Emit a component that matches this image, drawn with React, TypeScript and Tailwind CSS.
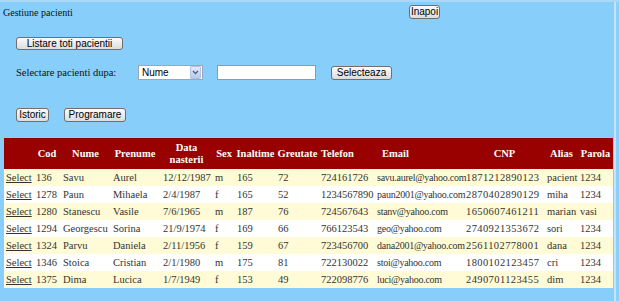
import React from 'react';

interface Pacient {
    cod: string;
    nume: string;
    prenume: string;
    data: string;
    sex: string;
    inaltime: string;
    greutate: string;
    telefon: string;
    email: string;
    cnp: string;
    alias: string;
    parola: string;
}

const pacienti: Pacient[] = [
    { cod: '136', nume: 'Savu', prenume: 'Aurel', data: '12/12/1987', sex: 'm', inaltime: '165', greutate: '72', telefon: '724161726', email: 'savu.aurel@yahoo.com', cnp: '1871212890123', alias: 'pacient', parola: '1234' },
    { cod: '1278', nume: 'Paun', prenume: 'Mihaela', data: '2/4/1987', sex: 'f', inaltime: '165', greutate: '52', telefon: '1234567890', email: 'paun2001@yahoo.com', cnp: '2870402890129', alias: 'miha', parola: '1234' },
    { cod: '1280', nume: 'Stanescu', prenume: 'Vasile', data: '7/6/1965', sex: 'm', inaltime: '187', greutate: '76', telefon: '724567643', email: 'stanv@yahoo.com', cnp: '1650607461211', alias: 'marian', parola: 'vasi' },
    { cod: '1294', nume: 'Georgescu', prenume: 'Sorina', data: '21/9/1974', sex: 'f', inaltime: '169', greutate: '66', telefon: '766123543', email: 'geo@yahoo.com', cnp: '2740921353672', alias: 'sori', parola: '1234' },
    { cod: '1324', nume: 'Parvu', prenume: 'Daniela', data: '2/11/1956', sex: 'f', inaltime: '159', greutate: '67', telefon: '723456700', email: 'dana2001@yahoo.com', cnp: '2561102778001', alias: 'dana', parola: '1234' },
    { cod: '1346', nume: 'Stoica', prenume: 'Cristian', data: '2/1/1980', sex: 'm', inaltime: '175', greutate: '81', telefon: '722130022', email: 'stoi@yahoo.com', cnp: '1800102123457', alias: 'cri', parola: '1234' },
    { cod: '1375', nume: 'Dima', prenume: 'Lucica', data: '1/7/1949', sex: 'f', inaltime: '153', greutate: '49', telefon: '722098776', email: 'luci@yahoo.com', cnp: '2490701123455', alias: 'dim', parola: '1234' },
];

const Btn: React.FC<{ label: string; className: string }> = ({ label, className }) => (
    <button
        type="button"
        className={`flex items-center justify-center border border-[#6f6f6f] rounded-[3px] bg-gradient-to-b from-[#fbfbfb] to-[#dcdcdc] text-[10px] leading-none text-black font-['Liberation_Sans',Arial,sans-serif] ${className}`}
    >
        {label}
    </button>
);

const App: React.FC = () => {
    return (
        <div className="flex w-[619px] h-[301px] bg-[#87cefa] border-t-2 border-t-[#a9d9f7] overflow-hidden font-['Liberation_Serif','Times_New_Roman',serif]">
            <div className="w-[614px] flex flex-col">
                <div className="flex items-center h-[14px] mt-[3px] pl-[3px]">
                    <span className="w-[406px] text-[10px] text-[#111]">Gestiune pacienti</span>
                    <Btn label="Inapoi" className="w-[31px] h-[14px]" />
                </div>

                <div className="pl-[16px] mt-[18px]">
                    <Btn label="Listare toti pacientii" className="w-[107px] h-[13px]" />
                </div>

                <div className="flex items-center pl-[16px] mt-[15px] h-[15px]">
                    <span className="w-[122px] text-[10.5px] text-[#111]">Selectare pacienti dupa:</span>
                    <div className="flex items-center w-[65px] h-[15px] bg-white border border-[#9aa7b5]">
                        <span className="flex-1 pl-[3px] text-[10px] font-['Liberation_Sans',Arial,sans-serif] text-black">Nume</span>
                        <span className="flex items-center justify-center w-[11px] h-[13px] mr-[1px] bg-gradient-to-b from-[#e3ebfb] to-[#b8c9ef] border border-[#b3c3e6] rounded-[1px]">
                            <svg width="7" height="5" viewBox="0 0 7 5">
                                <path d="M1 1 L3.5 3.5 L6 1" fill="none" stroke="#4d6185" strokeWidth="1.4" />
                            </svg>
                        </span>
                    </div>
                    <div className="w-[99px] h-[15px] ml-[14px] bg-white border border-[#8f9aa6]" />
                    <Btn label="Selecteaza" className="w-[61px] h-[14px] ml-[15px]" />
                </div>

                <div className="flex items-center gap-[15px] pl-[16px] mt-[28px]">
                    <Btn label="Istoric" className="w-[33px] h-[14px]" />
                    <Btn label="Programare" className="w-[62px] h-[14px]" />
                </div>

                <table className="ml-[4px] mt-[16px] w-[609px] table-fixed border-collapse text-[10.5px] text-[#333333]">
                    <colgroup>
                        <col className="w-[29px]" />
                        <col className="w-[28px]" />
                        <col className="w-[49px]" />
                        <col className="w-[50px]" />
                        <col className="w-[53px]" />
                        <col className="w-[22px]" />
                        <col className="w-[41px]" />
                        <col className="w-[43px]" />
                        <col className="w-[56px]" />
                        <col className="w-[89px]" />
                        <col className="w-[81px]" />
                        <col className="w-[33px]" />
                        <col className="w-[35px]" />
                    </colgroup>
                    <thead>
                        <tr className="h-[31px] bg-[#990000] text-white font-bold leading-[12px]">
                            <th className="p-0"></th>
                            <th className="p-0 text-center">Cod</th>
                            <th className="p-0 text-center">Nume</th>
                            <th className="p-0 text-center">Prenume</th>
                            <th className="p-0 text-center">Data nasterii</th>
                            <th className="p-0 text-center">Sex</th>
                            <th className="p-0 text-center">Inaltime</th>
                            <th className="p-0 text-center">Greutate</th>
                            <th className="p-0 pl-[2px] text-left">Telefon</th>
                            <th className="p-0 pl-[7px] text-left">Email</th>
                            <th className="p-0 text-center">CNP</th>
                            <th className="p-0 text-center">Alias</th>
                            <th className="p-0 text-center">Parola</th>
                        </tr>
                    </thead>
                    <tbody>
                        {pacienti.map((p, i) => (
                            <tr key={p.cod} className={`h-[17px] whitespace-nowrap ${i % 2 === 0 ? 'bg-[#fffbd6]' : 'bg-white'}`}>
                                <td className="p-0 pl-[2px]"><span className="underline">Select</span></td>
                                <td className="p-0 pl-[3px]">{p.cod}</td>
                                <td className="p-0 pl-[2px]">{p.nume}</td>
                                <td className="p-0 pl-[3px]">{p.prenume}</td>
                                <td className="p-0 pl-[3px]">{p.data}</td>
                                <td className="p-0 pl-[2px]">{p.sex}</td>
                                <td className="p-0 pl-[2px]">{p.inaltime}</td>
                                <td className="p-0 pl-[2px]">{p.greutate}</td>
                                <td className="p-0 pl-[2px]">{p.telefon}</td>
                                <td className="p-0 pl-[2px] text-[10px] tracking-[-0.25px]">{p.email}</td>
                                <td className="p-0 pl-[2px] tracking-[0.4px]">{p.cnp}</td>
                                <td className="p-0 pl-[2px]">{p.alias}</td>
                                <td className="p-0 pl-[2px]">{p.parola}</td>
                            </tr>
                        ))}
                    </tbody>
                </table>
            </div>
            <div className="w-[2px] bg-[#c3e5f9]" />
            <div className="flex-1 bg-[#8ccff9]" />
        </div>
    );
};

export default App;
